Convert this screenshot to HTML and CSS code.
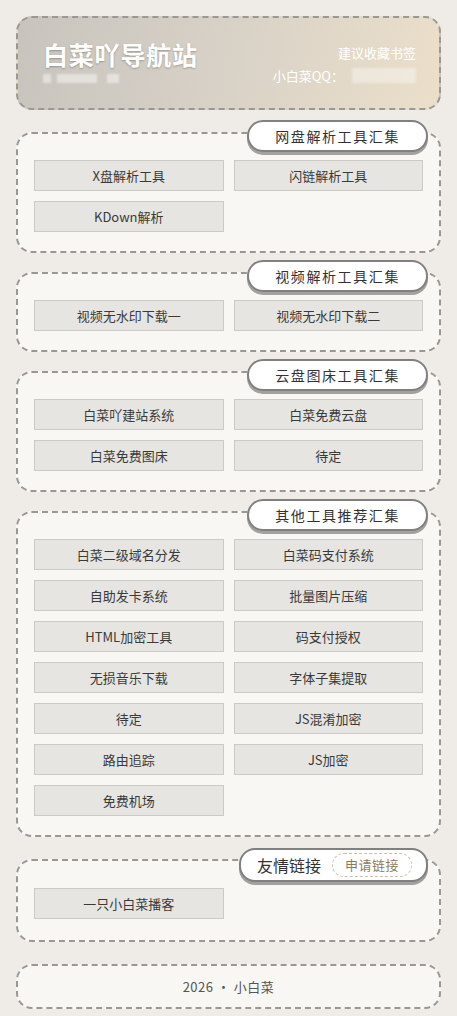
FILE: index.html
```html
<!DOCTYPE html>
<html lang="zh-CN">
<head>
    <meta charset="UTF-8">
    <meta name="viewport" content="width=device-width, initial-scale=1.0">
    <title>白菜吖导航站</title>
    <link rel="stylesheet" href="styles.css">
</head>
<body>
    <div class="page">
        <!-- 顶部 -->
        <div class="header">
            <div class="header-left">
                <h1>白菜吖导航站</h1>
                <div class="blur-line">
                    <span class="blur b1"></span><span class="blur b2"></span><span class="blur b3"></span>
                </div>
            </div>
            <div class="header-right">
                <div class="tip">建议收藏书签</div>
                <div class="qq">小白菜QQ：<span class="blur qq-num"></span></div>
            </div>
        </div>

        <div class="section">
            <div class="tag">网盘解析工具汇集</div>
            <div class="links">
                <a class="link">X盘解析工具</a>
                <a class="link">闪链解析工具</a>
                <a class="link">KDown解析</a>
            </div>
        </div>

        <div class="section">
            <div class="tag">视频解析工具汇集</div>
            <div class="links">
                <a class="link">视频无水印下载一</a>
                <a class="link">视频无水印下载二</a>
            </div>
        </div>

        <div class="section">
            <div class="tag">云盘图床工具汇集</div>
            <div class="links">
                <a class="link">白菜吖建站系统</a>
                <a class="link">白菜免费云盘</a>
                <a class="link">白菜免费图床</a>
                <a class="link">待定</a>
            </div>
        </div>

        <div class="section">
            <div class="tag">其他工具推荐汇集</div>
            <div class="links">
                <a class="link">白菜二级域名分发</a>
                <a class="link">白菜码支付系统</a>
                <a class="link">自助发卡系统</a>
                <a class="link">批量图片压缩</a>
                <a class="link">HTML加密工具</a>
                <a class="link">码支付授权</a>
                <a class="link">无损音乐下载</a>
                <a class="link">字体子集提取</a>
                <a class="link">待定</a>
                <a class="link">JS混淆加密</a>
                <a class="link">路由追踪</a>
                <a class="link">JS加密</a>
                <a class="link">免费机场</a>
            </div>
        </div>

        <div class="section friends">
            <div class="tag tag-friends">友情链接 <span class="apply">申请链接</span></div>
            <div class="links">
                <a class="link">一只小白菜播客</a>
            </div>
        </div>

        <div class="footer">2026 · 小白菜</div>
    </div>
</body>
</html>
```

FILE: styles.css
```css
/* 기본 */
body {
    margin: 0;
    background-color: #efece8;
    font-family: "Noto Sans CJK SC", "Liberation Sans", sans-serif;
    color: #444;
}

.page {
    padding: 16px;
}

/* 头部 */
.header {
    display: flex;
    justify-content: space-between;
    align-items: center;
    height: 90px;
    padding: 0 23px 0 25px;
    border: 2px dashed #9a9894;
    border-radius: 16px;
    background: linear-gradient(100deg, #c8c4bd 0%, #d6d0c6 45%, #ebdfca 100%);
    margin-bottom: 22px;
}

.header h1 {
    margin: -4px 0 0;
    font-size: 25px;
    line-height: 30px;
    color: #fff;
    letter-spacing: 0.8px;
    text-shadow: 0 1px 2px rgba(0, 0, 0, 0.25);
}

.blur-line {
    display: flex;
    gap: 2px;
    margin-top: 5px;
}

.blur {
    display: inline-block;
    height: 9px;
    background-color: rgba(255, 255, 255, 0.45);
    filter: blur(1px);
}
.b1 { width: 8px; }
.b2 { width: 40px; margin-left: 4px; }
.b3 { width: 12px; margin-left: 8px; }

.header-right {
    text-align: right;
    color: #fff;
    font-size: 13px;
    line-height: 18px;
}

.tip {
    margin-top: 2px;
}

.qq {
    margin-top: 5px;
    display: flex;
    align-items: center;
    justify-content: flex-end;
}

.qq-num {
    width: 64px;
    height: 15px;
    margin-left: 8px;
    background-color: rgba(255, 255, 255, 0.35);
}

/* 分类卡片 */
.section {
    position: relative;
    background-color: #f8f7f3;
    border: 2px dashed #9a9894;
    border-radius: 16px;
    padding: 26px 16px 19px;
    margin-bottom: 19px;
}

.section.friends {
    margin-top: 22px;
    margin-bottom: 22px;
    padding-top: 27px;
    padding-bottom: 21px;
}

.tag {
    position: absolute;
    top: -14px;
    right: 11px;
    height: 28px;
    line-height: 28px;
    padding: 0 26px;
    background-color: #fff;
    border: 2px solid #808080;
    border-radius: 16px;
    box-shadow: 0 3px 0 #a3a19e;
    font-size: 14px;
    letter-spacing: 1.6px;
    color: #333;
    white-space: nowrap;
}

.tag-friends {
    top: -13px;
    height: 30px;
    line-height: 30px;
    padding: 0 14px 0 16px;
    display: flex;
    align-items: center;
    gap: 11px;
    font-size: 16px;
    letter-spacing: 0;
}

.apply {
    height: 22px;
    line-height: 22px;
    padding: 0 12px;
    border: 1px dashed #cfbfa6;
    border-radius: 12px;
    font-size: 13px;
    color: #8f7a5e;
    letter-spacing: 0.5px;
}

/* 按钮 */
.links {
    display: grid;
    grid-template-columns: 1fr 1fr;
    column-gap: 10px;
    row-gap: 10px;
}

.link {
    display: block;
    height: 29px;
    line-height: 29px;
    text-align: center;
    background-color: #e6e5e1;
    border: 1px solid #cbcac6;
    font-size: 13px;
    color: #3a3a3a;
    cursor: pointer;
}

/* 底部 */
.footer {
    height: 41px;
    line-height: 41px;
    text-align: center;
    background-color: #f8f7f3;
    border: 2px dashed #9a9894;
    border-radius: 16px;
    font-size: 13px;
    color: #555;
    letter-spacing: 0.5px;
}
```
